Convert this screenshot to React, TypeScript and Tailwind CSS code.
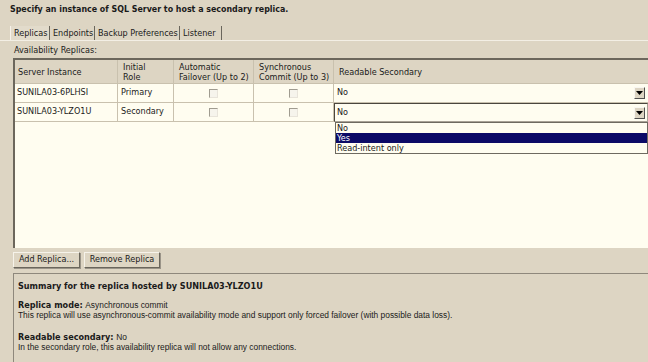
import React from "react";

const F = { fontFamily: "'DejaVu Sans Condensed', 'DejaVu Sans', sans-serif" };
const A = { fontFamily: "'Liberation Sans', Arial, sans-serif" };

function Check() {
  return (
    <div className="w-[9px] h-[9px] bg-[#f6f4ec] border-t border-l border-[#a09c90] border-r border-b border-r-[#e8e4da] border-b-[#e8e4da]" />
  );
}

function DropBtn() {
  return (
    <div className="w-[11px] h-[12px] bg-[#ddd5c3] border-t border-l border-[#f8f6f0] border-r border-b border-r-[#505050] border-b-[#505050] flex items-center justify-center">
      <svg width="7" height="4" viewBox="0 0 7 4">
        <path d="M0 0 H7 L3.5 4 Z" fill="#000" />
      </svg>
    </div>
  );
}

export default function App() {
  const cell = "border-r border-b border-[#c9c1ae]";
  return (
    <div className="w-[648px] h-[362px] bg-[#ddd5c3] overflow-hidden relative flex flex-col text-[#1a1a1a]" style={F}>
      <div className="h-[18px] pl-[10px] pt-[3px] font-bold text-[8.8px] leading-[12px]">
        Specify an instance of SQL Server to host a secondary replica.
      </div>
      <div className="mt-[8px] h-[15px] flex pl-[10px] border-b border-[#f3efe5] text-[9px] leading-[14px]">
        <div className="w-[40px] pl-[3px] border-r border-[#6a665c] border-l border-l-[#f6f2ea] bg-[#e2dbcb]">Replicas</div>
        <div className="w-[45px] pl-[3px] border-r border-[#6a665c]">Endpoints</div>
        <div className="w-[85px] pl-[3px] border-r border-[#6a665c]">Backup Preferences</div>
        <div className="w-[42px] pl-[3px] border-r border-[#6a665c]">Listener</div>
      </div>
      <div className="h-[17px] pl-[14px] pt-[3px] text-[9px] leading-[12px]">Availability Replicas:</div>
      <div className="ml-[13px] h-[190px] border-l-2 border-t-2 border-l-[#6c675c] border-t-[#6c675c] bg-[#fffdf0] text-[9px]">
        <div className="grid grid-cols-[103px_56px_80px_80px_1fr] bg-[#ddd5c3] h-[24px] leading-[10px]">
          <div className={`${cell} pl-[3px] flex items-center`}>Server Instance</div>
          <div className={`${cell} pl-[5px] flex items-center`}>Initial<br />Role</div>
          <div className={`${cell} pl-[5px] flex items-center`}>Automatic<br />Failover (Up to 2)</div>
          <div className={`${cell} pl-[5px] flex items-center`}>Synchronous<br />Commit (Up to 3)</div>
          <div className={`border-b border-[#c9c1ae] pl-[5px] flex items-center`}>Readable Secondary</div>
        </div>
        <div className="grid grid-cols-[103px_56px_80px_80px_1fr] h-[19px]">
          <div className={`${cell} pl-[2px] flex items-center`}>SUNILA03-6PLHSI</div>
          <div className={`${cell} pl-[3px] flex items-center`}>Primary</div>
          <div className={`${cell} flex items-center justify-center`}><Check /></div>
          <div className={`${cell} flex items-center justify-center`}><Check /></div>
          <div className="border-b border-[#c9c1ae] pl-[3px] pr-[3px] flex items-center justify-between">
            <span>No</span>
            <DropBtn />
          </div>
        </div>
        <div className="grid grid-cols-[103px_56px_80px_80px_1fr] h-[19px]">
          <div className={`${cell} pl-[2px] flex items-center`}>SUNILA03-YLZO1U</div>
          <div className={`${cell} pl-[3px] flex items-center`}>Secondary</div>
          <div className={`${cell} flex items-center justify-center`}><Check /></div>
          <div className={`${cell} flex items-center justify-center`}><Check /></div>
          <div className="border border-[#4a463e] border-b-[#a8a296] border-r-[#a8a296] pl-[2px] pr-[2px] flex items-center justify-between">
            <span>No</span>
            <DropBtn />
          </div>
        </div>
      </div>
      <div className="mt-[4px] ml-[13px] h-[16px] flex gap-[4px] text-[9px]">
        <div className="w-[67px] flex items-center justify-center bg-[#ddd5c3] border border-[#f6f3ea] border-r-[#6a665c] border-b-[#6a665c] shadow-[1px_1px_0_#9a9488]">Add Replica...</div>
        <div className="w-[76px] flex items-center justify-center bg-[#ddd5c3] border border-[#f6f3ea] border-r-[#6a665c] border-b-[#6a665c] shadow-[1px_1px_0_#9a9488]">Remove Replica</div>
      </div>
      <div className="mt-[5px] ml-[13px] flex-1 border-t border-l border-[#8e887c] pl-[4px] pt-[6px]">
        <div className="font-bold text-[9px] leading-[12px]">Summary for the replica hosted by SUNILA03-YLZO1U</div>
        <div className="mt-[8px] text-[9px] leading-[10px]">
          <span className="font-bold">Replica mode:</span> <span style={A} className="text-[8.4px]">Asynchronous commit</span>
        </div>
        <div style={A} className="text-[8.4px] leading-[10px]">
          This replica will use asynchronous-commit availability mode and support only forced failover (with possible data loss).
        </div>
        <div className="mt-[12px] text-[9px] leading-[10px]">
          <span className="font-bold">Readable secondary:</span> <span style={A} className="text-[8.4px]">No</span>
        </div>
        <div style={A} className="text-[8.4px] leading-[10px]">
          In the secondary role, this availability replica will not allow any connections.
        </div>
      </div>
      <div className="absolute left-[335px] top-[122px] w-[313px] h-[32px] bg-[#fffdf0] border border-[#6e6a60] text-[9px] leading-[10px]">
        <div className="h-[10px] pl-[1px]">No</div>
        <div className="h-[10px] pl-[1px] bg-[#0c0a66] text-white">Yes</div>
        <div className="h-[10px] pl-[1px]">Read-intent only</div>
      </div>
    </div>
  );
}
